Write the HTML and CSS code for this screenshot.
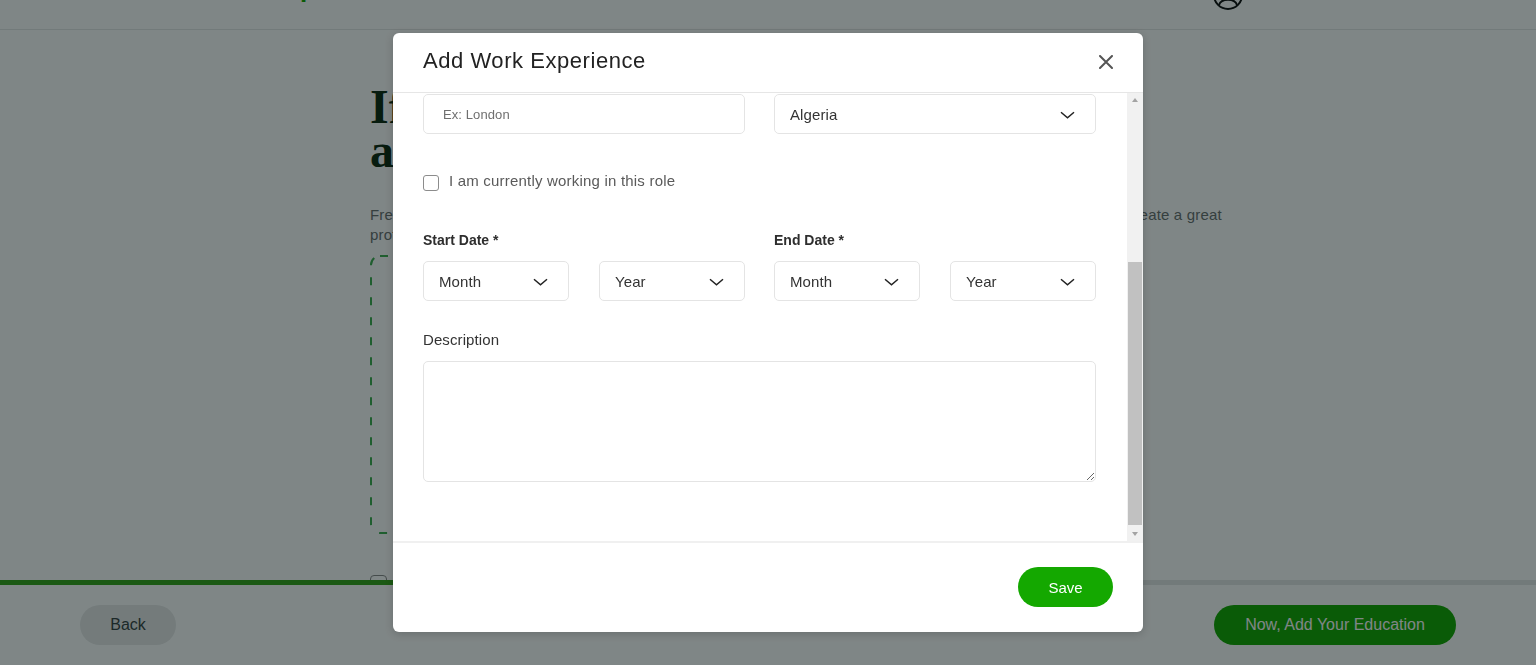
FILE: index.html
```html
<!DOCTYPE html>
<html lang="en">
<head>
<meta charset="utf-8">
<title>Add Work Experience</title>
<link rel="stylesheet" href="styles.css">
</head>
<body>
<div class="page">
  <header class="topbar">
    <span class="logo">upwork</span>
    <svg class="avatar" width="32" height="32" viewBox="0 0 32 32" aria-hidden="true">
      <circle cx="16" cy="16" r="14" fill="none" stroke="#111" stroke-width="2"/>
      <circle cx="16" cy="12" r="5" fill="none" stroke="#111" stroke-width="2"/>
      <path d="M7 26 C 9 19, 23 19, 25 26" fill="none" stroke="#111" stroke-width="2"/>
    </svg>
  </header>

  <main class="main">
    <h1 class="heading">If you have relevant experience,<br>add it here.</h1>
    <p class="lead">Freelancers who add their experience are twice as likely to win work. But if you're just starting out, you can still create a great<br>profile. Just head on to the next page.</p>
    <div class="dashbox">
      <svg class="dash-border" width="700" height="279" viewBox="0 0 700 279" aria-hidden="true">
        <rect x="1" y="1" width="698" height="277" rx="9" fill="none" stroke="#3fae50" stroke-width="2" stroke-dasharray="8 12"/>
      </svg>
    </div>
    <label class="skip"><span class="skip-box"></span><span class="skip-text">I don't have any work experience</span></label>
  </main>

  <footer class="footbar">
    <div class="progress"><div class="progress-fill" style="width:50%"></div></div>
    <div class="foot-actions">
      <button class="btn-back" type="button">Back</button>
      <button class="btn-next" type="button">Now, Add Your Education</button>
    </div>
  </footer>
</div>

<div class="overlay">
  <div class="modal" role="dialog" aria-label="Add Work Experience">
    <div class="modal-head">
      <h2 class="modal-title">Add Work Experience</h2>
      <button class="close" type="button" aria-label="Close">
        <svg width="14" height="14" viewBox="0 0 14 14" aria-hidden="true">
          <path d="M1 1 L13 13 M13 1 L1 13" stroke="#555" stroke-width="2" stroke-linecap="round"/>
        </svg>
      </button>
    </div>

    <div class="modal-body">
      <div class="modal-content">
        <div class="two-col first-row">
          <input class="field" type="text" placeholder="Ex: London">
          <div class="select">
            <span class="select-value">Algeria</span>
            <svg class="chev" width="15" height="8" viewBox="0 0 15 8" aria-hidden="true"><path d="M1 1.2 L7.5 6.8 L14 1.2" fill="none" stroke="#222" stroke-width="1.5"/></svg>
          </div>
        </div>

        <label class="check-row">
          <span class="check-box"></span>
          <span class="check-label">I am currently working in this role</span>
        </label>

        <div class="two-col dates">
          <div class="date-group">
            <div class="label strong">Start Date *</div>
            <div class="pair">
              <div class="select"><span class="select-value">Month</span><svg class="chev" width="15" height="8" viewBox="0 0 15 8" aria-hidden="true"><path d="M1 1.2 L7.5 6.8 L14 1.2" fill="none" stroke="#222" stroke-width="1.5"/></svg></div>
              <div class="select"><span class="select-value">Year</span><svg class="chev" width="15" height="8" viewBox="0 0 15 8" aria-hidden="true"><path d="M1 1.2 L7.5 6.8 L14 1.2" fill="none" stroke="#222" stroke-width="1.5"/></svg></div>
            </div>
          </div>
          <div class="date-group">
            <div class="label strong">End Date *</div>
            <div class="pair">
              <div class="select"><span class="select-value">Month</span><svg class="chev" width="15" height="8" viewBox="0 0 15 8" aria-hidden="true"><path d="M1 1.2 L7.5 6.8 L14 1.2" fill="none" stroke="#222" stroke-width="1.5"/></svg></div>
              <div class="select"><span class="select-value">Year</span><svg class="chev" width="15" height="8" viewBox="0 0 15 8" aria-hidden="true"><path d="M1 1.2 L7.5 6.8 L14 1.2" fill="none" stroke="#222" stroke-width="1.5"/></svg></div>
            </div>
          </div>
        </div>

        <div class="label desc-label">Description</div>
        <textarea class="desc"></textarea>
      </div>

      <div class="scrollbar" aria-hidden="true">
        <div class="sb-btn"><span class="tri up"></span></div>
        <div class="sb-track"><div class="sb-thumb"></div></div>
        <div class="sb-btn"><span class="tri down"></span></div>
      </div>
    </div>

    <div class="modal-foot">
      <button class="save" type="button">Save</button>
    </div>
  </div>
</div>
</body>
</html>
```

FILE: styles.css
```css
* { box-sizing: border-box; }

html, body {
  margin: 0;
  padding: 0;
  height: 100%;
  overflow: hidden;
  background: #fff;
  font-family: "Liberation Sans", Arial, sans-serif;
  color: #222;
}

.page {
  margin-top: -40px;
}

/* ---------- background page ---------- */
.topbar {
  height: 70px;
  border-bottom: 1px solid #e4e6e6;
  display: flex;
  align-items: center;
  justify-content: space-between;
  padding: 0 292px 0 284px;
}

.logo {
  font-size: 26px;
  font-weight: 700;
  color: #14a800;
  line-height: 26px;
  margin-bottom: 14px;
}

.avatar { display: block; }

.main {
  padding-left: 370px;
}

.heading {
  margin: 55px 0 0;
  font-family: "Liberation Serif", "Times New Roman", serif;
  font-size: 48px;
  line-height: 44px;
  font-weight: 700;
  color: #0e2a10;
}

.lead {
  margin: 32px 0 0;
  font-size: 15px;
  line-height: 20px;
  letter-spacing: 0.18px;
  color: #6b7070;
  white-space: nowrap;
}

.dashbox {
  margin-top: 10px;
  width: 700px;
  height: 279px;
  position: relative;
}

.dash-border {
  position: absolute;
  inset: 0;
}

.skip {
  margin-top: 41px;
  display: flex;
  align-items: center;
  gap: 10px;
  font-size: 15px;
  color: #444;
}

.skip-box {
  width: 17px;
  height: 17px;
  border: 1.5px solid #8a8a8a;
  border-radius: 4px;
}

.footbar {
  position: fixed;
  left: 0;
  right: 0;
  bottom: 0;
  height: 85px;
  background: #fff;
  z-index: 5;
}

.progress {
  height: 5px;
  background: #e4e6e6;
}

.progress-fill {
  height: 100%;
  background: #37a51a;
}

.foot-actions {
  height: 80px;
  display: flex;
  align-items: center;
  justify-content: space-between;
  padding: 0 80px;
}

.btn-back, .btn-next {
  height: 40px;
  border: 0;
  border-radius: 20px;
  font-family: "Liberation Sans", Arial, sans-serif;
  font-size: 16px;
  cursor: pointer;
}

.btn-back {
  width: 96px;
  background: #e8e9e9;
  color: #3a4444;
}

.btn-next {
  width: 242px;
  background: #14a800;
  color: #fff;
}

/* ---------- overlay + modal ---------- */
.overlay {
  position: fixed;
  inset: 0;
  z-index: 10;
  background: rgba(0, 13, 13, 0.5);
  display: flex;
  justify-content: center;
  align-items: flex-start;
  padding-top: 33px;
}

.modal {
  width: 750px;
  height: 599px;
  background: #fff;
  border-radius: 6px;
  box-shadow: 0 2px 8px rgba(0, 0, 0, 0.18);
  display: flex;
  flex-direction: column;
  overflow: hidden;
}

.modal-head {
  height: 60px;
  flex: none;
  border-bottom: 1px solid #e6e6e6;
  display: flex;
  align-items: center;
  justify-content: space-between;
  padding: 0 30px 3px 30px;
}

.modal-title {
  margin: 0;
  font-size: 22px;
  font-weight: 400;
  letter-spacing: 0.55px;
  color: #222;
  line-height: 28px;
}

.close {
  width: 14px;
  height: 14px;
  padding: 0;
  border: 0;
  background: none;
  display: flex;
  margin-top: 2px;
  cursor: pointer;
}

.modal-body {
  height: 448px;
  flex: none;
  display: flex;
}

.modal-content {
  flex: 1;
  min-width: 0;
  padding: 0 31px 0 30px;
  overflow: hidden;
}

.two-col {
  display: grid;
  grid-template-columns: 322px 322px;
  column-gap: 29px;
}

.first-row { margin-top: 1px; }

.field {
  height: 40px;
  width: 100%;
  border: 1px solid #e4e4e4;
  border-radius: 5px;
  padding: 0 19px;
  font-family: "Liberation Sans", Arial, sans-serif;
  font-size: 13px;
  letter-spacing: 0.1px;
  color: #333;
  outline: none;
}

.field::placeholder { color: #6f6f6f; }

.select {
  height: 40px;
  border: 1px solid #e4e4e4;
  border-radius: 5px;
  display: flex;
  align-items: center;
  justify-content: space-between;
  padding: 0 20px 0 15px;
  font-size: 15px;
  letter-spacing: 0.1px;
  color: #333;
}

.chev { display: block; margin-top: 1px; }

.check-row {
  margin-top: 37px;
  height: 20px;
  display: flex;
  align-items: flex-start;
  gap: 10px;
}

.check-box {
  width: 16px;
  height: 16px;
  margin-top: 4px;
  border: 1px solid #8c8c8c;
  border-radius: 3px;
  flex: none;
}

.check-label {
  font-size: 15px;
  line-height: 20px;
  letter-spacing: 0.2px;
  color: #5a5a5a;
}

.dates { margin-top: 41px; }

.label {
  font-size: 15px;
  line-height: 16px;
  color: #333;
}

.label.strong {
  font-size: 14px;
  font-weight: 700;
  color: #2e2e2e;
}

.pair {
  margin-top: 13px;
  display: grid;
  grid-template-columns: 1fr 1fr;
  column-gap: 30px;
}

.desc-label { margin-top: 31px; letter-spacing: 0.1px; }

.desc {
  display: block;
  margin-top: 13px;
  width: 100%;
  height: 121px;
  border: 1px solid #e4e4e4;
  border-radius: 5px;
  resize: vertical;
  font-family: "Liberation Sans", Arial, sans-serif;
  font-size: 15px;
  outline: none;
}

/* fake classic scrollbar */
.scrollbar {
  width: 16px;
  flex: none;
  background: #f1f1f1;
  display: flex;
  flex-direction: column;
}

.sb-btn {
  height: 16px;
  flex: none;
  display: flex;
  align-items: center;
  justify-content: center;
}

.tri {
  width: 0;
  height: 0;
  border-left: 3.5px solid transparent;
  border-right: 3.5px solid transparent;
}

.tri.up { border-bottom: 4px solid #a3a3a3; margin-top: -2px; }
.tri.down { border-top: 4px solid #a3a3a3; margin-top: 2px; }

.sb-track {
  flex: 1;
  display: flex;
  flex-direction: column;
  justify-content: flex-end;
}

.sb-thumb {
  height: 263px;
  margin: 0 1px;
  background: #c1c1c1;
}

.modal-foot {
  flex: 1;
  border-top: 2px solid #f0f0f0;
  display: flex;
  align-items: center;
  justify-content: flex-end;
  padding: 0 30px 1px 0;
}

.save {
  width: 95px;
  height: 40px;
  border: 0;
  border-radius: 20px;
  background: #14a800;
  color: #fff;
  font-family: "Liberation Sans", Arial, sans-serif;
  font-size: 15px;
  cursor: pointer;
}
```
